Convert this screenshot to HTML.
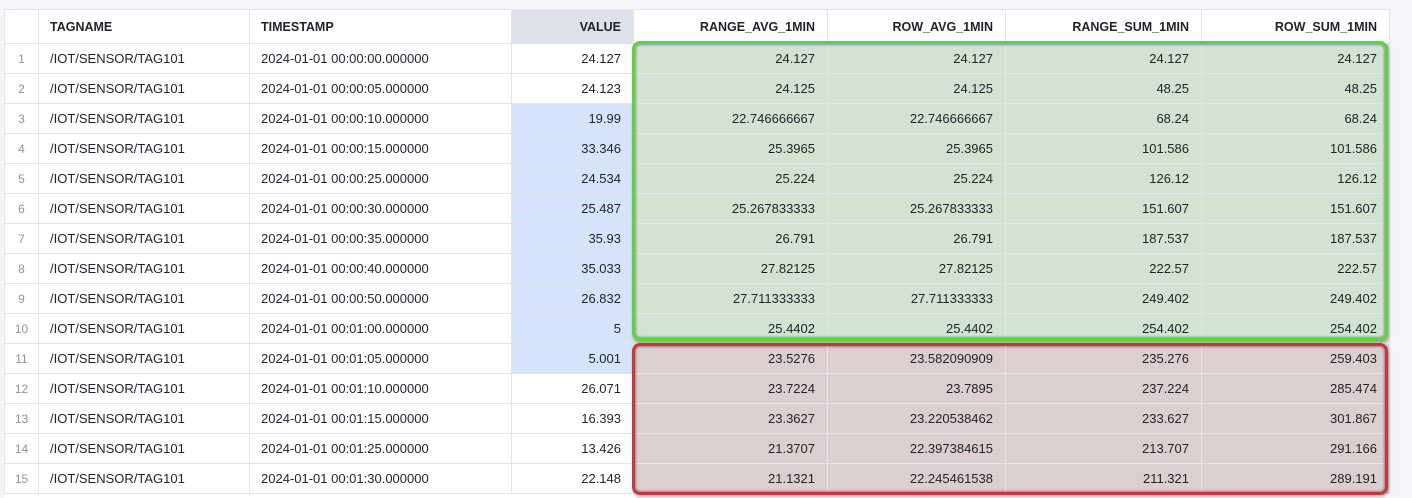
<!DOCTYPE html><html><head><style>
html,body{margin:0;width:1412px;height:498px;overflow:hidden}
body{background:#f4f5f8;font-family:"Liberation Sans",sans-serif;position:relative}
table{position:absolute;left:4px;top:9px;border-collapse:collapse;table-layout:fixed;background:#fff;font-size:13px;color:#1f2329}
td,th{border:1px solid #e3e5ea;height:29px;padding:0 12px 0 11px;white-space:nowrap;overflow:hidden}
th{height:33px;font-weight:bold;font-size:12.5px;color:#1f2329;text-align:left}
th.r,td.r{text-align:right}
td.n{color:#8a93a6;text-align:center;padding:0;font-size:12px}
th.v{background:#dde1e8}
td.b{background:#d6e4fb}
.g{background:#d3e2d1}.rd{background:#dccfcf}
.box{position:absolute;border-radius:8px;box-shadow:inset 0 0 2px 1px rgba(0,0,0,.35),1px 2px 3px rgba(0,0,0,.3)}
.tail{position:absolute;left:4px;top:494px;width:1385px;height:4px;background:#fff}
</style></head><body>
<div class="tail"></div>
<table>
<colgroup><col style="width:34px"><col style="width:211px"><col style="width:262px"><col style="width:122px"><col style="width:194px"><col style="width:178px"><col style="width:196px"><col style="width:188px"></colgroup>
<tr><th></th><th>TAGNAME</th><th>TIMESTAMP</th><th class="r v">VALUE</th><th class="r">RANGE_AVG_1MIN</th><th class="r">ROW_AVG_1MIN</th><th class="r">RANGE_SUM_1MIN</th><th class="r">ROW_SUM_1MIN</th></tr>
<tr><td class="n">1</td><td>/IOT/SENSOR/TAG101</td><td>2024-01-01 00:00:00.000000</td><td class="r">24.127</td><td class="r g">24.127</td><td class="r g">24.127</td><td class="r g">24.127</td><td class="r g">24.127</td></tr>
<tr><td class="n">2</td><td>/IOT/SENSOR/TAG101</td><td>2024-01-01 00:00:05.000000</td><td class="r">24.123</td><td class="r g">24.125</td><td class="r g">24.125</td><td class="r g">48.25</td><td class="r g">48.25</td></tr>
<tr><td class="n">3</td><td>/IOT/SENSOR/TAG101</td><td>2024-01-01 00:00:10.000000</td><td class="r b">19.99</td><td class="r g">22.746666667</td><td class="r g">22.746666667</td><td class="r g">68.24</td><td class="r g">68.24</td></tr>
<tr><td class="n">4</td><td>/IOT/SENSOR/TAG101</td><td>2024-01-01 00:00:15.000000</td><td class="r b">33.346</td><td class="r g">25.3965</td><td class="r g">25.3965</td><td class="r g">101.586</td><td class="r g">101.586</td></tr>
<tr><td class="n">5</td><td>/IOT/SENSOR/TAG101</td><td>2024-01-01 00:00:25.000000</td><td class="r b">24.534</td><td class="r g">25.224</td><td class="r g">25.224</td><td class="r g">126.12</td><td class="r g">126.12</td></tr>
<tr><td class="n">6</td><td>/IOT/SENSOR/TAG101</td><td>2024-01-01 00:00:30.000000</td><td class="r b">25.487</td><td class="r g">25.267833333</td><td class="r g">25.267833333</td><td class="r g">151.607</td><td class="r g">151.607</td></tr>
<tr><td class="n">7</td><td>/IOT/SENSOR/TAG101</td><td>2024-01-01 00:00:35.000000</td><td class="r b">35.93</td><td class="r g">26.791</td><td class="r g">26.791</td><td class="r g">187.537</td><td class="r g">187.537</td></tr>
<tr><td class="n">8</td><td>/IOT/SENSOR/TAG101</td><td>2024-01-01 00:00:40.000000</td><td class="r b">35.033</td><td class="r g">27.82125</td><td class="r g">27.82125</td><td class="r g">222.57</td><td class="r g">222.57</td></tr>
<tr><td class="n">9</td><td>/IOT/SENSOR/TAG101</td><td>2024-01-01 00:00:50.000000</td><td class="r b">26.832</td><td class="r g">27.711333333</td><td class="r g">27.711333333</td><td class="r g">249.402</td><td class="r g">249.402</td></tr>
<tr><td class="n">10</td><td>/IOT/SENSOR/TAG101</td><td>2024-01-01 00:01:00.000000</td><td class="r b">5</td><td class="r g">25.4402</td><td class="r g">25.4402</td><td class="r g">254.402</td><td class="r g">254.402</td></tr>
<tr><td class="n">11</td><td>/IOT/SENSOR/TAG101</td><td>2024-01-01 00:01:05.000000</td><td class="r b">5.001</td><td class="r rd">23.5276</td><td class="r rd">23.582090909</td><td class="r rd">235.276</td><td class="r rd">259.403</td></tr>
<tr><td class="n">12</td><td>/IOT/SENSOR/TAG101</td><td>2024-01-01 00:01:10.000000</td><td class="r">26.071</td><td class="r rd">23.7224</td><td class="r rd">23.7895</td><td class="r rd">237.224</td><td class="r rd">285.474</td></tr>
<tr><td class="n">13</td><td>/IOT/SENSOR/TAG101</td><td>2024-01-01 00:01:15.000000</td><td class="r">16.393</td><td class="r rd">23.3627</td><td class="r rd">23.220538462</td><td class="r rd">233.627</td><td class="r rd">301.867</td></tr>
<tr><td class="n">14</td><td>/IOT/SENSOR/TAG101</td><td>2024-01-01 00:01:25.000000</td><td class="r">13.426</td><td class="r rd">21.3707</td><td class="r rd">22.397384615</td><td class="r rd">213.707</td><td class="r rd">291.166</td></tr>
<tr><td class="n">15</td><td>/IOT/SENSOR/TAG101</td><td>2024-01-01 00:01:30.000000</td><td class="r">22.148</td><td class="r rd">21.1321</td><td class="r rd">22.245461538</td><td class="r rd">211.321</td><td class="r rd">289.191</td></tr>
</table>
<div class="box" style="left:632px;top:41px;width:750px;height:294px;border:3px solid #5fd33f"></div>
<div class="box" style="left:632px;top:343px;width:750px;height:146px;border:3px solid #c4373a"></div>
</body></html>
